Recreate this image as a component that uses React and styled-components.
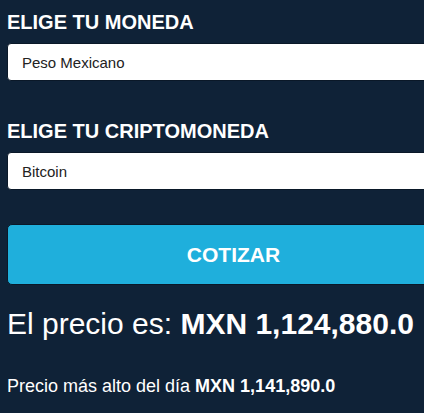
import styled, { createGlobalStyle } from "styled-components";

const GlobalStyle = createGlobalStyle`
  html, body {
    margin: 0;
    padding: 0;
    overflow: hidden;
    background: #0f2237;
  }
  body {
    font-family: "Liberation Sans", Arial, sans-serif;
    color: #fff;
  }
`;

const Page = styled.div`
  width: 460px;
  padding: 11px 0 0 7px;
  min-height: 413px;
  box-sizing: border-box;
`;

const Field = styled.div`
  display: flex;
  flex-direction: column;
  margin-bottom: ${(p) => p.$gap}px;
`;

const Label = styled.label`
  font-size: 20px;
  font-weight: bold;
  line-height: 23px;
  margin-bottom: 9px;
  text-transform: uppercase;
`;

const Select = styled.select`
  appearance: none;
  height: 38px;
  box-sizing: border-box;
  padding: 0 14px;
  border: 1px solid #0a1828;
  border-radius: 4px;
  background: #fff;
  color: #222;
  font-family: inherit;
  font-size: 15px;
  outline: none;
`;

const Button = styled.button`
  width: 100%;
  height: 61px;
  border: 1px solid #0a1828;
  border-radius: 5px;
  background: #1fafdc;
  color: #fff;
  font-family: inherit;
  font-size: 21px;
  font-weight: bold;
  text-transform: uppercase;
  cursor: pointer;
`;

const Result = styled.div`
  margin-top: 22px;
`;

const Price = styled.p`
  margin: 0;
  font-size: 30px;
  line-height: 34px;
`;

const Extra = styled.p`
  margin: 35px 0 0;
  font-size: 18px;
  line-height: 21px;
`;

export default function App() {
  return (
    <>
      <GlobalStyle />
      <Page>
        <Field $gap={39}>
          <Label>Elige tu Moneda</Label>
          <Select defaultValue="MXN">
            <option value="MXN">Peso Mexicano</option>
            <option value="USD">Dólar de Estados Unidos</option>
          </Select>
        </Field>
        <Field $gap={34}>
          <Label>Elige tu Criptomoneda</Label>
          <Select defaultValue="BTC">
            <option value="BTC">Bitcoin</option>
            <option value="ETH">Ethereum</option>
          </Select>
        </Field>
        <Button>Cotizar</Button>
        <Result>
          <Price>
            El precio es: <b>MXN 1,124,880.0</b>
          </Price>
          <Extra>
            Precio más alto del día <b>MXN 1,141,890.0</b>
          </Extra>
        </Result>
      </Page>
    </>
  );
}
